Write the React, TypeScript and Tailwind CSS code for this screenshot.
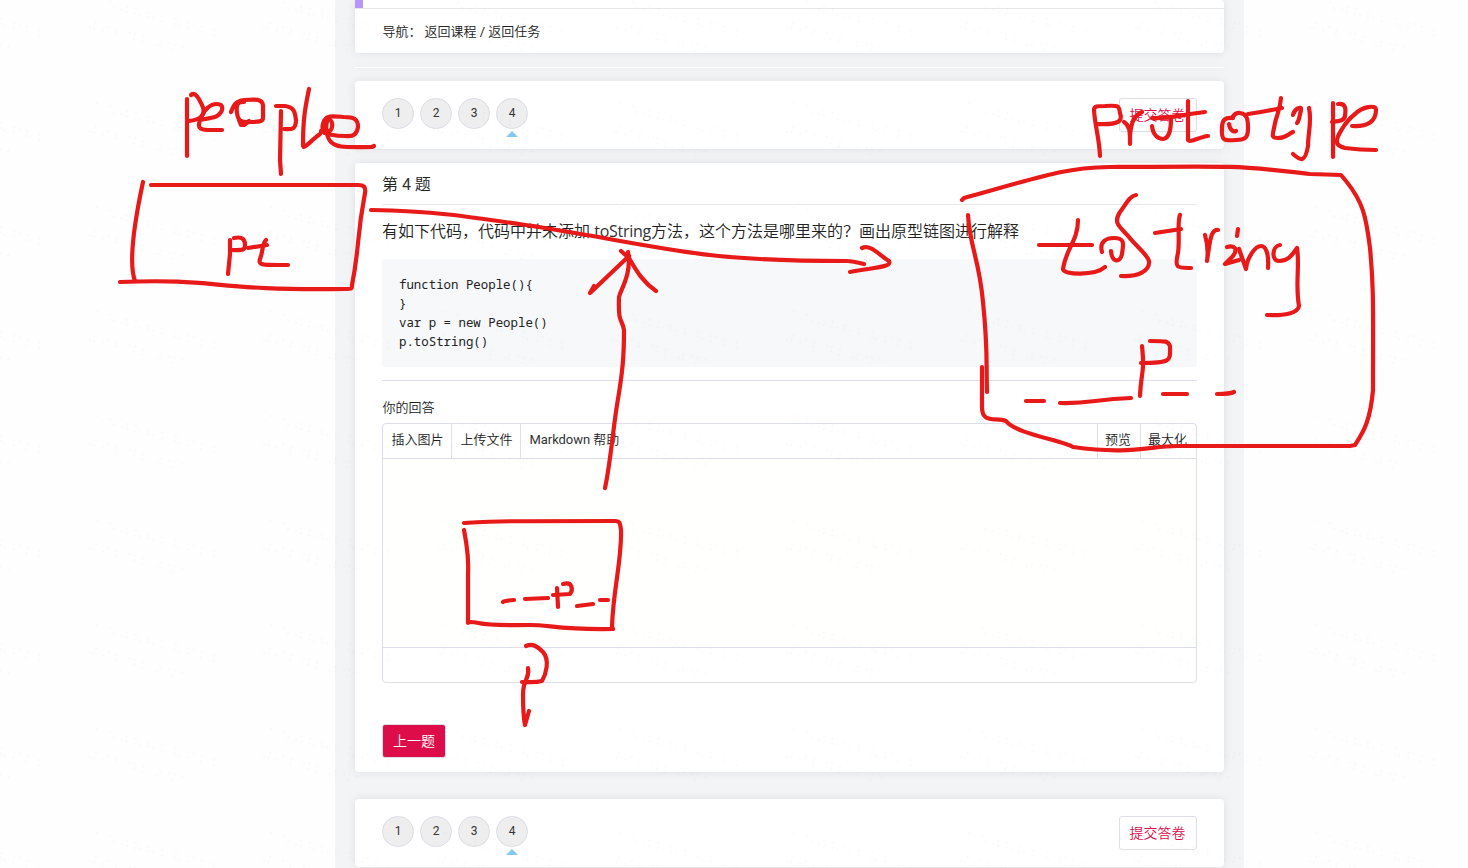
import React from "react";

const ink = [
  // "people"
  "M187 99 L187 156", "M191 95 C196 91 200 101 202 105 C207 115 200 120 189 121",
  "M200 120 C208 118 214 118 217 116 C224 111 224 104 217 104 C209 104 204 110 200 120 C198 126 198 130 208 130 L222 130",
  "M231 112 C234 104 236 101 244 100 C256 99 262 99 263 105 L263 118 C263 122 258 122 250 122 C240 123 238 120 237 113 C236 105 237 102 244 102",
  "M239 120 L241 125 L244 125 L249 121", "M276 106 L285 106 C294 107 295 112 296 120 C296 131 290 129 284 129", "M281 111 L280 160 L281 174",
  "M309 89 C305 108 303 120 303 145 C303 151 310 141 320 134", "M321 131 C328 135 336 136 345 136 C355 137 357 133 358 127 C358 119 354 117 344 117 C332 116 327 115 324 121 C321 128 323 134 326 133 C334 131 334 120 328 119 C325 125 326 137 331 142 C337 148 345 147 372 147 L374 146",
  // left box and its label
  "M143 182 C137 210 127 260 135 281", "M151 185 L358 185 C364 185 366 187 365 193 C356 240 360 245 352 285 C352 289 352 289 345 289 C210 291 220 278 120 282",
  "M230 240 L230 254 L228 274", "M234 238 C243 236 245 240 245 245 C245 251 242 250 231 250", "M248 248 L267 245", "M266 240 C262 244 263 250 261 256 C257 266 260 265 288 265",
  // link to the right box
  "M371 210 C430 211 460 215 545 228 C680 250 700 261 847 261 Q852 261 864 264", "M862 248 C871 244 880 256 889 261 C892 267 878 267 850 272",
  // upward arrow
  "M605 488 C610 466 613 430 617 405 C623 370 624 355 624 330 C622 318 618 325 619 297 C621 289 632 273 628 252", "M621 251 L629 258 C637 272 643 282 656 291", "M629 256 L590 293 L594 286",
  // "prototype"
  "M1100 156 C1099 136 1095 127 1094 110 C1094 106 1097 106 1105 106 C1119 105 1119 106 1120 113 C1123 121 1119 125 1098 124",
  "M1124 122 C1130 126 1130 131 1130 144 L1130 136 C1131 124 1133 116 1142 112", "M1152 126 C1153 135 1158 139 1163 139 C1170 138 1171 128 1171 118",
  "M1152 118 C1170 119 1178 115 1205 112", "M1188 101 L1188 140 C1190 143 1199 137 1208 136",
  "M1233 118 C1225 117 1222 120 1222 128 C1221 141 1224 141 1236 140 C1246 140 1248 137 1248 128 C1248 119 1247 114 1240 113 C1236 112 1234 115 1232 118", "M1229 124 C1230 131 1234 132 1236 131",
  "M1248 114 C1264 112 1270 110 1282 108", "M1281 98 C1280 110 1277 114 1275 123 C1273 135 1270 138 1278 138 C1286 138 1288 134 1293 132",
  "M1293 115 C1294 109 1302 105 1301 110 C1299 119 1299 121 1297 123", "M1309 108 C1312 122 1308 133 1308 146 C1305 163 1301 161 1293 154",
  "M1333 103 L1333 157", "M1338 104 C1346 103 1346 109 1345 116 C1344 121 1339 121 1332 122", "M1352 126 C1368 127 1376 121 1376 110 C1376 104 1362 107 1355 114 C1350 118 1345 124 1342 129 C1333 143 1337 146 1345 148 Q1360 150 1376 150",
  // right box
  "M962 200 L964 198 C1050 174 1065 168 1110 167 C1260 166 1235 166 1310 174 L1341 175 L1346 181 C1363 202 1366 216 1370 248 C1374 290 1373 310 1373 390 C1370 425 1361 435 1355 445 L1350 446 L1177 446 C1150 446 1130 455 1073 447 C1061 440 1016 434 1006 421 C995 417 982 424 982 407 L982 367",
  "M968 215 C970 248 979 258 983 302 C988 350 986 360 987 392",
  // "toString"
  "M1039 245 L1092 245", "M1078 220 C1078 241 1066 248 1063 269 C1063 275 1095 276 1105 267", "M1102 252 C1099 241 1107 238 1114 238 C1126 238 1123 245 1122 254 C1120 263 1112 263 1111 251",
  "M1136 195 C1129 196 1125 206 1120 212 C1113 223 1119 226 1129 237 C1136 246 1147 254 1149 261 C1150 271 1138 277 1121 276", "M1155 233 L1181 229", "M1180 215 C1177 221 1180 240 1178 253 C1174 269 1178 268 1191 268",
  "M1205 235 C1208 245 1208 254 1207 261 C1210 240 1211 229 1218 230", "M1227 247 C1235 245 1238 249 1233 256 L1225 264 L1239 260", "M1238 229 L1237 236",
  "M1239 249 L1246 269 C1247 258 1255 246 1261 246 C1266 246 1269 254 1268 268", "M1280 245 C1272 246 1271 261 1279 261 C1287 261 1291 257 1297 248 C1300 265 1295 284 1299 306 C1298 313 1285 316 1267 315",
  // "_ _P_ _" in the right box
  "M1026 401 L1044 401", "M1060 403 C1090 404 1095 399 1131 398", "M1142 346 C1145 375 1141 370 1140 396", "M1150 341 C1167 341 1168 341 1170 346 C1170 360 1173 363 1141 363", "M1163 394 L1187 394", "M1217 394 C1225 394 1230 394 1234 392",
  // lower box
  "M464 523 C500 521 500 521 615 521 C620 521 620 523 621 530 C622 560 613 590 612 627 L613 629 C560 630 550 625 530 625 C470 626 485 622 469 622", "M468 623 L468 577 C469 560 466 540 464 530",
  "M503 602 Q504 601 514 600", "M525 599 L548 598", "M557 588 L558 607", "M563 584 C573 581 573 590 570 594 L553 595", "M577 606 L593 604", "M600 600 L608 600",
  // "p" below the lower box
  "M526 646 C533 643 538 647 543 652 C550 660 546 674 542 681 C535 683 529 682 522 682", "M528 668 C530 680 523 677 523 695 C523 710 524 720 525 725 L529 711",
];

const dots = [
  [8,17],[21,20],[25,26],[33,28],[38,25],[38,30],[47,27],[46,32],[51,33],[59,31],[59,35],[64,36],[73,34],[73,39],[87,37],[86,42],[90,44],[100,41],[99,46],[105,42],[113,45],[112,50],[125,48],[125,53],
  [1,45],[5,46],[7,41],[14,48],[20,45],[28,48],[27,52],[41,51],[46,52],[45,57],[54,55],[53,60],[67,63],[71,64],[72,60],[81,62],[86,63],[84,68],[94,65],
];

const panel = "bg-white rounded-[4px] shadow-[0_0_10px_rgba(0,0,0,0.09)]";

function Pager() {
  return (
    <section className={`flex h-[68px] items-start justify-between px-[27px] pt-[17px] ${panel}`}>
      <div className="flex gap-1.5">
        {[1, 2, 3, 4].map((n) => (
          <div key={n} className="flex flex-col items-center">
            <div className="flex h-[31px] w-8 items-center justify-center rounded-full border border-[#dcdee8] bg-[#eee] pb-px font-[Roboto] text-[12px] font-normal leading-none text-[#333]">{n}</div>
            {n === 4 && <svg width="12" height="6" className="mt-[2px]"><path d="M0 6L6 0L12 6Z" fill="#83c9ee" /></svg>}
          </div>
        ))}
      </div>
      <button className="h-[34px] w-[78px] rounded-[3px] border border-[#dcdee8] pr-px text-[14px] leading-[30px] text-[#dc0d49]">提交答卷</button>
    </section>
  );
}

export default function App() {
  return (
    <div className="relative h-[868px] w-[1468px] overflow-hidden bg-[#fefefe] font-['Roboto','Noto_Sans_CJK_SC',sans-serif] [font-weight:350] text-[#222]">
      <main className="ml-[335px] flex h-[900px] w-[909px] flex-col bg-[#f3f4f6] px-5">
        <section className={`flex h-[53px] w-[869px] shrink-0 flex-col ${panel}`}>
          <div className="h-[9px] border-b border-[#e7e7e7]"><div className="h-2 w-2 bg-[#b795fa]" /></div>
          <nav className="flex h-[44px] items-center gap-[3px] pl-[27.5px] pt-px text-[13px]"><span className="w-[39px]">导航：</span><span>返回课程 <span className="font-normal">/</span> 返回任务</span></nav>
        </section>
        <div className="mt-[14px] h-px w-[869px] shrink-0 bg-white shadow-[0_0_8px_rgba(0,0,0,0.12)]" />
        <div className="mt-[13px] w-[869px] shrink-0"><Pager /></div>
        <section className={`mt-[14px] flex h-[609px] w-[869px] shrink-0 flex-col px-[27px] ${panel}`}>
          <h2 className="h-[42px] border-b border-[#e8e8e8] text-[16px] leading-[43px] [font-weight:350]">第 <span className="font-normal text-[#333]">4</span> 题</h2>
          <p className="h-[54px] whitespace-nowrap font-['Open_Sans','Noto_Sans_CJK_SC',sans-serif] text-[16px] leading-[53px]">有如下代码，代码中并未添加 <span className="font-normal tracking-[-0.25px] text-[#333]">toString</span>方法，这个方法是哪里来的？画出原型链图进行解释</p>
          <pre className="h-[108px] rounded-[3px] bg-[#f6f8fa] pl-[17px] pt-[16px] font-['Noto_Sans_Mono','DejaVu_Sans_Mono',monospace] text-[12.4px] font-normal leading-[19px]">{"function People(){\n}\nvar p = new People()\np.toString()"}</pre>
          <div className="mt-[13px] h-px bg-[#dcdee8]" />
          <label className="mt-[17px] h-[25px] pl-[0.5px] text-[13px] leading-[20px]">你的回答</label>
          <div className="h-[260px] rounded-[4px] border border-[#dcdee8] text-[13px]">
            <div className="flex h-[35px] border-b border-[#dcdee8] leading-[32px]">
              <span className="w-[69px] border-r border-[#dcdee8] pl-[8.5px]">插入图片</span>
              <span className="w-[69px] border-r border-[#dcdee8] pl-[8.5px]">上传文件</span>
              <span className="grow pl-[8.5px]"><span className="font-normal tracking-[-0.05px] text-[#333]">Markdown</span> 帮助</span>
              <span className="w-[44px] border-x border-[#dcdee8] pl-[7px]">预览</span>
              <span className="w-[55px] pl-[7px]">最大化</span>
            </div>
            <div className="h-[189px] border-b border-[#dcdee8] bg-[#fffffd]" />
          </div>
          <button className="mt-[41px] h-[34px] w-[64px] rounded-[3px] border border-[#dcdee8] bg-[#dc0d49] text-[14px] text-white">上一题</button>
        </section>
        <div className="mt-[27px] w-[869px] shrink-0"><Pager /></div>
      </main>
      <svg className="pointer-events-none absolute inset-0" width="1468" height="868" viewBox="0 0 1468 868">
        <defs>
          <pattern id="speckles" x="88.8" y="-18" width="174.3" height="104.25" patternUnits="userSpaceOnUse">
            {dots.map(([x, y], i) => <circle key={i} cx={x} cy={y} r="1.1" fill="#000" fillOpacity="0.02" />)}
          </pattern>
        </defs>
        <rect width="1468" height="868" fill="url(#speckles)" />
        {ink.map((d) => <path key={d} d={d} fill="none" stroke="#e71919" strokeWidth="4.2" strokeLinecap="round" strokeLinejoin="round" />)}
      </svg>
    </div>
  );
}
